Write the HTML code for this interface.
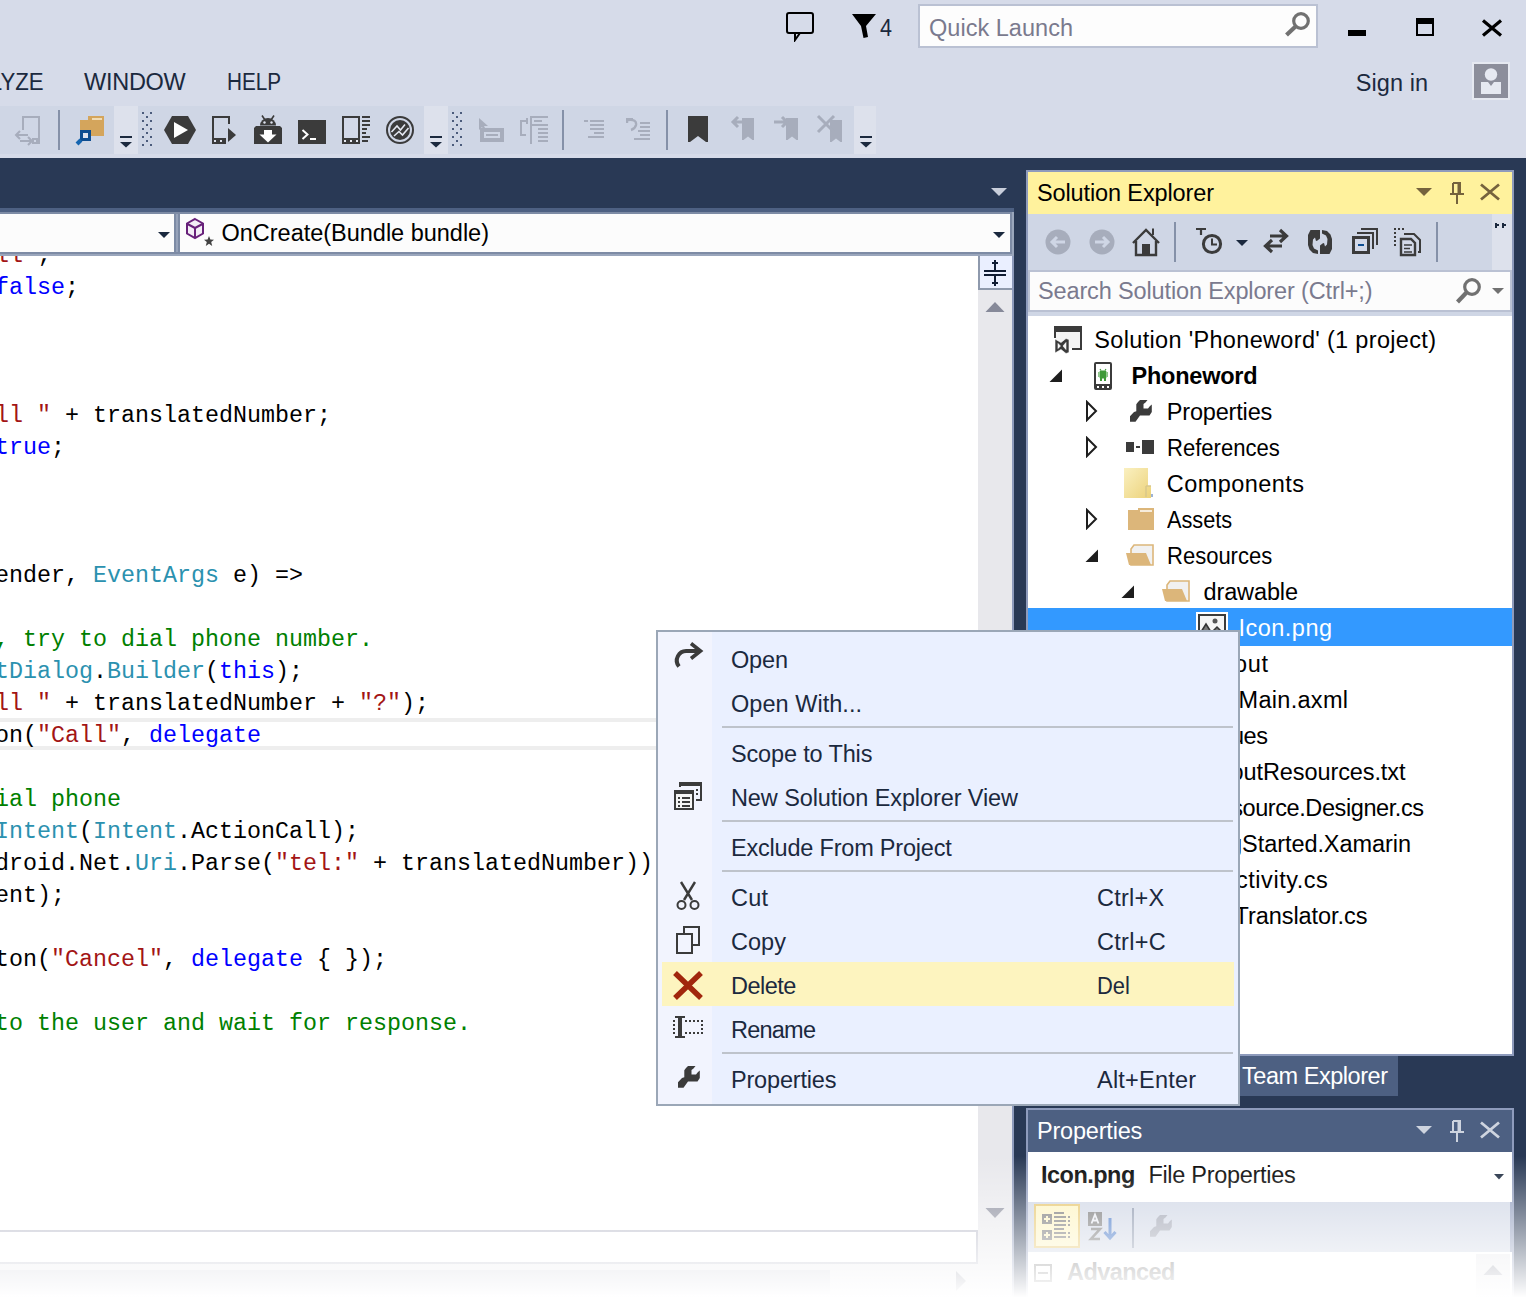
<!DOCTYPE html>
<html lang="en"><head><meta charset="utf-8"><title>Phoneword - Microsoft Visual Studio</title>
<style>
html,body{margin:0;padding:0;}
body{width:1526px;height:1302px;overflow:hidden;background:#d6dbe9;position:relative;font-family:"Liberation Sans", sans-serif;}
#root{position:absolute;left:0;top:0;width:1526px;height:1302px;overflow:hidden;}
#root div,#root span.t,#root svg,#root pre{position:absolute;}
span.t{white-space:pre;line-height:30px;height:30px;}
pre{margin:0;font-family:"Liberation Mono", monospace;white-space:pre;}
.k{color:#0000ff}.s{color:#a31515}.c{color:#008000}.y{color:#2b91af}
</style></head><body><div id="root">
<div style="left:918px;top:4px;width:400px;height:44px;background:#fdfdfd;box-sizing:border-box;border:2px solid #bac1d3;"></div>
<span id="t1" class="t " style="left:929px;top:12.66px;font-size:23.5px;color:#7a7a8e;letter-spacing:0.027px;">Quick Launch</span>
<span id="t2" class="t " style="left:880px;top:12.86px;font-size:23.5px;color:#1b293e;letter-spacing:0.000px;transform:scaleX(0.9176);transform-origin:0 0;">4</span>
<span id="t3" class="t " style="left:-56px;top:66.66px;font-size:23.5px;color:#1b293e;letter-spacing:0.000px;transform:scaleX(0.9453);transform-origin:0 0;">ANALYZE</span>
<span id="t4" class="t " style="left:84px;top:66.66px;font-size:23.5px;color:#1b293e;letter-spacing:-0.265px;">WINDOW</span>
<span id="t5" class="t " style="left:226.5px;top:66.66px;font-size:23.5px;color:#1b293e;letter-spacing:0.000px;transform:scaleX(0.8829);transform-origin:0 0;">HELP</span>
<span id="t6" class="t " style="left:1355.8px;top:68.16px;font-size:23.5px;color:#1b293e;letter-spacing:0.057px;">Sign in</span>
<div style="left:1472px;top:62px;width:38px;height:38px;background:#8c8e9b;box-sizing:border-box;border:2px solid #e6e9f1;"></div>
<div style="left:0px;top:106px;width:114px;height:48px;background:#cfd6e5;"></div>
<div style="left:114px;top:106px;width:24px;height:48px;background:#dde1ec;"></div>
<div style="left:138px;top:106px;width:286px;height:48px;background:#cfd6e5;"></div>
<div style="left:424px;top:106px;width:24px;height:48px;background:#dde1ec;"></div>
<div style="left:448px;top:106px;width:406px;height:48px;background:#cfd6e5;"></div>
<div style="left:854px;top:106px;width:22px;height:48px;background:#dde1ec;"></div>
<div style="left:58px;top:110px;width:2px;height:40px;background:#8591a8;"></div>
<div style="left:562px;top:110px;width:2px;height:40px;background:#8591a8;"></div>
<div style="left:666px;top:110px;width:2px;height:40px;background:#8591a8;"></div>
<svg style="left:784px;top:10px" width="32" height="32" viewBox="0 0 32 32"><rect x="3" y="3" width="26" height="20" rx="2" fill="none" stroke="#000" stroke-width="2"/><path d="M11,23 V30 L16,23" fill="none" stroke="#000" stroke-width="2"/></svg>
<svg style="left:850px;top:12px" width="28" height="28" viewBox="0 0 28 28"><path d="M2,2 H26 L16,14 L18,25 L13.5,26 L11,14 Z" fill="#000"/></svg>
<svg style="left:1282px;top:8px" width="32" height="32" viewBox="0 0 32 32"><circle cx="19" cy="13" r="7.3" fill="none" stroke="#717171" stroke-width="3.2"/><path d="M13.5,18.5 L4.5,27" stroke="#717171" stroke-width="4.2" fill="none"/></svg>
<div style="left:1348px;top:30px;width:18px;height:6px;background:#000;"></div>
<div style="left:1416px;top:18px;width:18px;height:18px;background:transparent;box-sizing:border-box;border:2px solid #000;border-top-width:6px;"></div>
<svg style="left:1480px;top:18px" width="24" height="20" viewBox="0 0 24 20"><path d="M3,2.5 L21,17.5 M21,2.5 L3,17.5" stroke="#000" stroke-width="3.2" fill="none"/></svg>
<svg style="left:1474px;top:64px" width="34" height="34" viewBox="0 0 34 34"><circle cx="17" cy="10.5" r="6.2" fill="#e6e9f1"/><path d="M7,18 H14 L17,22 L20,18 H27 V30 H7 Z" fill="#e6e9f1"/></svg>
<svg style="left:119px;top:134px" width="14" height="16" viewBox="0 0 14 16"><rect x="1" y="2" width="12" height="2" fill="#1b293e"/><path d="M1,8 H13 L7,13.500 Z" fill="#1b293e"/></svg>
<svg style="left:429px;top:134px" width="14" height="16" viewBox="0 0 14 16"><rect x="1" y="2" width="12" height="2" fill="#1b293e"/><path d="M1,8 H13 L7,13.500 Z" fill="#1b293e"/></svg>
<svg style="left:859px;top:134px" width="14" height="16" viewBox="0 0 14 16"><rect x="1" y="2" width="12" height="2" fill="#1b293e"/><path d="M1,8 H13 L7,13.500 Z" fill="#1b293e"/></svg>
<svg style="left:142px;top:110px" width="10" height="40" viewBox="0 0 10 40" shape-rendering="crispEdges"><rect x="0" y="2" width="2" height="2" fill="#4b5b7b"/><rect x="8" y="2" width="2" height="2" fill="#4b5b7b"/><rect x="4" y="6" width="2" height="2" fill="#4b5b7b"/><rect x="0" y="10" width="2" height="2" fill="#4b5b7b"/><rect x="8" y="10" width="2" height="2" fill="#4b5b7b"/><rect x="4" y="14" width="2" height="2" fill="#4b5b7b"/><rect x="0" y="18" width="2" height="2" fill="#4b5b7b"/><rect x="8" y="18" width="2" height="2" fill="#4b5b7b"/><rect x="4" y="22" width="2" height="2" fill="#4b5b7b"/><rect x="0" y="26" width="2" height="2" fill="#4b5b7b"/><rect x="8" y="26" width="2" height="2" fill="#4b5b7b"/><rect x="4" y="30" width="2" height="2" fill="#4b5b7b"/><rect x="0" y="34" width="2" height="2" fill="#4b5b7b"/><rect x="8" y="34" width="2" height="2" fill="#4b5b7b"/></svg>
<svg style="left:452px;top:110px" width="10" height="40" viewBox="0 0 10 40" shape-rendering="crispEdges"><rect x="0" y="2" width="2" height="2" fill="#4b5b7b"/><rect x="8" y="2" width="2" height="2" fill="#4b5b7b"/><rect x="4" y="6" width="2" height="2" fill="#4b5b7b"/><rect x="0" y="10" width="2" height="2" fill="#4b5b7b"/><rect x="8" y="10" width="2" height="2" fill="#4b5b7b"/><rect x="4" y="14" width="2" height="2" fill="#4b5b7b"/><rect x="0" y="18" width="2" height="2" fill="#4b5b7b"/><rect x="8" y="18" width="2" height="2" fill="#4b5b7b"/><rect x="4" y="22" width="2" height="2" fill="#4b5b7b"/><rect x="0" y="26" width="2" height="2" fill="#4b5b7b"/><rect x="8" y="26" width="2" height="2" fill="#4b5b7b"/><rect x="4" y="30" width="2" height="2" fill="#4b5b7b"/><rect x="0" y="34" width="2" height="2" fill="#4b5b7b"/><rect x="8" y="34" width="2" height="2" fill="#4b5b7b"/></svg>
<svg style="left:14px;top:114px" width="28" height="32" viewBox="0 0 28 32"><rect x="8" y="2" width="18" height="2" fill="#a7adbc"/><rect x="8" y="2" width="2" height="14" fill="#a7adbc"/><rect x="24" y="2" width="2" height="24" fill="#a7adbc"/><rect x="2" y="20" width="12" height="2" fill="#a7adbc"/><path d="M6,17 L2,21 L6,25" fill="none" stroke="#a7adbc" stroke-width="2"/><rect x="6" y="26" width="12" height="2" fill="#a7adbc"/><path d="M14,23 L18,27 L14,31" fill="none" stroke="#a7adbc" stroke-width="2"/><rect x="18" y="24" width="8" height="6" fill="#a7adbc"/><rect x="20" y="26" width="2" height="2" fill="#cfd6e5"/></svg>
<svg style="left:74px;top:114px" width="32" height="32" viewBox="0 0 32 32"><rect x="6" y="6" width="24" height="16" fill="#d4a55c"/><rect x="14" y="2" width="16" height="4" fill="#d4a55c"/><rect x="18" y="4" width="10" height="2" fill="#f1dcb4"/><rect x="7.5" y="17.5" width="8" height="8" fill="#dfe3ee" stroke="#0e4d90" stroke-width="3"/><path d="M7,26 L3,30" stroke="#1565b0" stroke-width="4"/></svg>
<svg style="left:162px;top:114px" width="36" height="32" viewBox="0 0 36 32"><path d="M2,16 L10,2 H26 L34,16 L26,30 H10 Z" fill="#3b3b3b"/><path d="M12,8 L26,16 L12,24 Z" fill="#fff"/></svg>
<svg style="left:210px;top:114px" width="28" height="32" viewBox="0 0 28 32"><path d="M19,10 V3 H3 V29 H15" fill="none" stroke="#3b3b3b" stroke-width="2"/><rect x="2" y="24" width="14" height="6" fill="#3b3b3b"/><rect x="4" y="26" width="2" height="2" fill="#dfe3ee"/><rect x="10" y="26" width="2" height="2" fill="#dfe3ee"/><path d="M18,14 L26,21 L18,28 Z" fill="#3b3b3b"/></svg>
<svg style="left:252px;top:114px" width="32" height="32" viewBox="0 0 32 32"><path d="M8,11.5 A8,7.5 0 0 1 24,11.5 Z" fill="#3b3b3b"/><path d="M10,1.5 L13,6 M22,1.5 L19,6" stroke="#3b3b3b" stroke-width="1.6"/><circle cx="12.5" cy="8.5" r="1.2" fill="#dfe3ee"/><circle cx="19.5" cy="8.5" r="1.2" fill="#dfe3ee"/><path d="M2,14 L4,12 H28 L30,14 V30 H2 Z" fill="#3b3b3b"/><path d="M12,16 H20 V20.5 H24.5 L16,28.5 L7.5,20.5 H12 Z" fill="#fff"/></svg>
<svg style="left:298px;top:120px" width="28" height="24" viewBox="0 0 28 24"><rect x="0" y="0" width="28" height="24" fill="#3b3b3b"/><path d="M4.5,10 L9.5,14.5 L4.5,19" fill="none" stroke="#fff" stroke-width="2"/><rect x="12" y="18" width="6" height="2" fill="#fff"/></svg>
<svg style="left:342px;top:116px" width="28" height="28" viewBox="0 0 28 28" shape-rendering="crispEdges"><rect x="0" y="0" width="18" height="28" fill="#3b3b3b"/><rect x="2" y="2" width="14" height="20" fill="#d3d9e8"/><rect x="2" y="24" width="2" height="2" fill="#e9ecf4"/><rect x="8" y="24" width="2" height="2" fill="#e9ecf4"/><rect x="14" y="24" width="2" height="2" fill="#e9ecf4"/><rect x="20" y="0" width="8" height="2" fill="#3b3b3b"/><rect x="20" y="4" width="8" height="2" fill="#3b3b3b"/><rect x="20" y="8" width="8" height="2" fill="#3b3b3b"/><rect x="20" y="12" width="5" height="2" fill="#3b3b3b"/><rect x="20" y="16" width="4" height="2" fill="#3b3b3b"/><rect x="20" y="20" width="8" height="2" fill="#3b3b3b"/><rect x="20" y="24" width="6" height="2" fill="#3b3b3b"/></svg>
<svg style="left:385px;top:115px" width="30" height="30" viewBox="0 0 30 30"><circle cx="15" cy="15" r="13" fill="none" stroke="#3b3b3b" stroke-width="2"/><circle cx="15" cy="15" r="10" fill="#3b3b3b"/><path d="M6.5,17 L12,11 L15.5,15 L20,9.5 M9,21 L14,16.5 L17.5,20 L23.5,13" fill="none" stroke="#e4e7f0" stroke-width="1.6"/></svg>
<svg style="left:476px;top:116px" width="30" height="28" viewBox="0 0 30 28"><path d="M3,2 V14 L6,11 L8,15 L10,14 L8,10 H12 Z" fill="#a7adbc"/><path d="M4,12 H28 V26 H4 Z M8,16 V22 H24 V16 Z" fill-rule="evenodd" fill="#a7adbc"/><rect x="10" y="18" width="12" height="2" fill="#a7adbc"/></svg>
<svg style="left:520px;top:116px" width="28" height="28" viewBox="0 0 28 28" shape-rendering="crispEdges"><rect x="10" y="0" width="2" height="28" fill="#a7adbc"/><rect x="10" y="0" width="18" height="2" fill="#a7adbc"/><rect x="0" y="4" width="8" height="2" fill="#a7adbc"/><rect x="0" y="4" width="2" height="16" fill="#a7adbc"/><rect x="0" y="18" width="6" height="2" fill="#a7adbc"/><rect x="6" y="2" width="2" height="6" fill="#a7adbc"/><rect x="14" y="4" width="8" height="2" fill="#a7adbc"/><rect x="12" y="8" width="16" height="2" fill="#a7adbc"/><rect x="18" y="12" width="10" height="2" fill="#a7adbc"/><rect x="18" y="16" width="10" height="2" fill="#a7adbc"/><rect x="18" y="20" width="10" height="2" fill="#a7adbc"/><rect x="18" y="24" width="10" height="2" fill="#a7adbc"/></svg>
<svg style="left:584px;top:120px" width="20" height="18" viewBox="0 0 20 18" shape-rendering="crispEdges"><rect x="0" y="0" width="4" height="2" fill="#a7adbc"/><rect x="6" y="0" width="14" height="2" fill="#a7adbc"/><rect x="6" y="4" width="14" height="2" fill="#a7adbc"/><rect x="6" y="8" width="14" height="2" fill="#a7adbc"/><rect x="10" y="12" width="10" height="2" fill="#a7adbc"/><rect x="4" y="16" width="16" height="2" fill="#a7adbc"/></svg>
<svg style="left:626px;top:118px" width="24" height="24" viewBox="0 0 24 24"><rect x="14" y="4" width="10" height="2" fill="#a7adbc"/><rect x="14" y="8" width="10" height="2" fill="#a7adbc"/><rect x="12" y="12" width="12" height="2" fill="#a7adbc"/><rect x="14" y="16" width="10" height="2" fill="#a7adbc"/><rect x="8" y="20" width="16" height="2" fill="#a7adbc"/><path d="M1,1 H7 M1,0 V5 M2,2 Q11,1 10,7 Q9,11 5,12" fill="none" stroke="#a7adbc" stroke-width="2.4"/></svg>
<svg style="left:688px;top:116px" width="20" height="26" viewBox="0 0 20 26"><path d="M0,0 H20 V26 H18 L10,20 L2,26 H0 Z" fill="#3b3b3b"/></svg>
<svg style="left:730px;top:114px" width="26" height="28" viewBox="0 0 26 28"><path d="M12,4 H24 V26 H22.5 L18,22.5 L13.5,26 H12 Z" fill="#a7adbc"/><path d="M16,8 H3 M8,3 L3,8 L8,13" fill="none" stroke="#a7adbc" stroke-width="3"/></svg>
<svg style="left:772px;top:114px" width="28" height="28" viewBox="0 0 28 28"><path d="M14,4 H26 V26 H24.5 L20,22.5 L15.5,26 H14 Z" fill="#a7adbc"/><path d="M2,8 H15 M10,3 L15,8 L10,13" fill="none" stroke="#a7adbc" stroke-width="3"/></svg>
<svg style="left:816px;top:114px" width="28" height="30" viewBox="0 0 28 30"><path d="M14,6 H26 V28 H24.5 L20,24.5 L15.5,28 H14 Z" fill="#a7adbc"/><path d="M2,2 L18,18 M18,2 L2,18" fill="none" stroke="#a7adbc" stroke-width="3"/></svg>
<div style="left:0px;top:158px;width:1526px;height:1144px;background:#293955;"></div>
<div style="left:0px;top:208px;width:1014px;height:4px;background:#4d6082;"></div>
<div style="left:0px;top:212px;width:1014px;height:44px;background:#7d8ba5;"></div>
<div style="left:0px;top:254px;width:1014px;height:2px;background:#9aa6bc;"></div>
<div style="left:176px;top:214px;width:2px;height:38px;background:#97a3ba;"></div>
<div style="left:0px;top:214px;width:174px;height:38px;background:#fcfcfc;"></div>
<div style="left:180px;top:214px;width:830px;height:38px;background:#fcfcfc;"></div>
<div style="left:1012px;top:212px;width:2px;height:44px;background:#9aa6bc;"></div>
<span id="t7" class="t " style="left:221.5px;top:218.16px;font-size:23.5px;color:#000000;letter-spacing:-0.014px;">OnCreate(Bundle bundle)</span>
<div style="left:0px;top:256px;width:978px;height:974px;background:#ffffff;"></div>
<div style="left:978px;top:256px;width:34px;height:1046px;background:#e8e8ec;"></div>
<div style="left:1012px;top:256px;width:2px;height:1046px;background:#8e9bbc;"></div>
<div style="left:978px;top:256px;width:34px;height:34px;background:#eaefff;box-sizing:border-box;border:2px solid #8e99ad;border-top:none;border-right:none;"></div>
<div style="left:0px;top:718px;width:978px;height:32px;background:#ffffff;box-sizing:border-box;border-top:4px solid #eeeeee;border-bottom:4px solid #eeeeee;"></div>
<div style="left:-4px;top:1230px;width:982px;height:34px;background:#ffffff;box-sizing:border-box;border:2px solid #b9bbc9;"></div>
<div style="left:0px;top:1264px;width:978px;height:38px;background:#e8e8ec;"></div>
<div style="left:0;top:256px;width:978px;height:974px;overflow:hidden;background:transparent">
<pre style="left:-5px;top:-16.20px;font-size:23.33px;line-height:32px;height:32px;color:#000"><span class="s">ll"</span>;</pre>
<pre style="left:-5px;top:15.80px;font-size:23.33px;line-height:32px;height:32px;color:#000"><span class="k">false</span>;</pre>
<pre style="left:-5px;top:143.80px;font-size:23.33px;line-height:32px;height:32px;color:#000"><span class="s">ll "</span> + translatedNumber;</pre>
<pre style="left:-5px;top:175.80px;font-size:23.33px;line-height:32px;height:32px;color:#000"><span class="k">true</span>;</pre>
<pre style="left:-5px;top:303.80px;font-size:23.33px;line-height:32px;height:32px;color:#000">ender, <span class="y">EventArgs</span> e) =&gt;</pre>
<pre style="left:-5px;top:367.80px;font-size:23.33px;line-height:32px;height:32px;color:#000"><span class="c">, try to dial phone number.</span></pre>
<pre style="left:-5px;top:399.80px;font-size:23.33px;line-height:32px;height:32px;color:#000"><span class="y">tDialog</span>.<span class="y">Builder</span>(<span class="k">this</span>);</pre>
<pre style="left:-5px;top:431.80px;font-size:23.33px;line-height:32px;height:32px;color:#000"><span class="s">ll "</span> + translatedNumber + <span class="s">"?"</span>);</pre>
<pre style="left:-5px;top:463.80px;font-size:23.33px;line-height:32px;height:32px;color:#000">on(<span class="s">"Call"</span>, <span class="k">delegate</span></pre>
<pre style="left:-5px;top:527.80px;font-size:23.33px;line-height:32px;height:32px;color:#000"><span class="c">ial phone</span></pre>
<pre style="left:-5px;top:559.80px;font-size:23.33px;line-height:32px;height:32px;color:#000"><span class="y">Intent</span>(<span class="y">Intent</span>.ActionCall);</pre>
<pre style="left:-5px;top:591.80px;font-size:23.33px;line-height:32px;height:32px;color:#000">droid.Net.<span class="y">Uri</span>.Parse(<span class="s">"tel:"</span> + translatedNumber))</pre>
<pre style="left:-5px;top:623.80px;font-size:23.33px;line-height:32px;height:32px;color:#000">ent);</pre>
<pre style="left:-5px;top:687.80px;font-size:23.33px;line-height:32px;height:32px;color:#000">ton(<span class="s">"Cancel"</span>, <span class="k">delegate</span> { });</pre>
<pre style="left:-5px;top:751.80px;font-size:23.33px;line-height:32px;height:32px;color:#000"><span class="c">to the user and wait for response.</span></pre>
</div>
<div style="left:1026px;top:170px;width:488px;height:886px;background:#8e9bbc;"></div>
<div style="left:1028px;top:172px;width:484px;height:42px;background:#fff29d;"></div>
<span id="t8" class="t " style="left:1037px;top:178.06px;font-size:23.5px;color:#000000;letter-spacing:-0.123px;">Solution Explorer</span>
<div style="left:1028px;top:214px;width:464px;height:56px;background:#cfd6e5;"></div>
<div style="left:1492px;top:214px;width:20px;height:56px;background:#dde1ec;"></div>
<div style="left:1174px;top:222px;width:2px;height:40px;background:#8591a8;"></div>
<div style="left:1436px;top:222px;width:2px;height:40px;background:#8591a8;"></div>
<div style="left:1028px;top:270px;width:484px;height:46px;background:#cfd6e5;"></div>
<div style="left:1028px;top:270px;width:484px;height:42px;background:#fcfcfc;box-sizing:border-box;border:2px solid #bac1d3;"></div>
<span id="t9" class="t " style="left:1038px;top:275.86px;font-size:23.5px;color:#7a7a8e;letter-spacing:-0.136px;">Search Solution Explorer (Ctrl+;)</span>
<div style="left:1028px;top:316px;width:484px;height:738px;background:#ffffff;"></div>
<div style="left:1028px;top:608px;width:484px;height:38px;background:#3399ff;"></div>
<span id="t10" class="t " style="left:1094.3px;top:324.66px;font-size:23.5px;color:#000000;letter-spacing:0.324px;">Solution 'Phoneword' (1 project)</span>
<span id="t11" class="t " style="left:1131.5px;top:360.66px;font-size:23.5px;color:#000000;font-weight:bold;letter-spacing:-0.232px;">Phoneword</span>
<span id="t12" class="t " style="left:1166.8px;top:396.66px;font-size:23.5px;color:#000000;letter-spacing:-0.179px;">Properties</span>
<span id="t13" class="t " style="left:1166.8px;top:432.66px;font-size:23.5px;color:#000000;letter-spacing:0.000px;transform:scaleX(0.9385);transform-origin:0 0;">References</span>
<span id="t14" class="t " style="left:1166.8px;top:468.66px;font-size:23.5px;color:#000000;letter-spacing:0.439px;">Components</span>
<span id="t15" class="t " style="left:1166.8px;top:504.66px;font-size:23.5px;color:#000000;letter-spacing:0.000px;transform:scaleX(0.9244);transform-origin:0 0;">Assets</span>
<span id="t16" class="t " style="left:1166.8px;top:540.66px;font-size:23.5px;color:#000000;letter-spacing:0.000px;transform:scaleX(0.9365);transform-origin:0 0;">Resources</span>
<span id="t17" class="t " style="left:1203.5px;top:576.66px;font-size:23.5px;color:#000000;letter-spacing:-0.125px;">drawable</span>
<span id="t18" class="t " style="left:1238.5px;top:612.66px;font-size:23.5px;color:#ffffff;letter-spacing:0.478px;">Icon.png</span>
<span id="t19" class="t " style="left:1202px;top:648.66px;font-size:23.5px;color:#000000;letter-spacing:0.656px;">layout</span>
<span id="t20" class="t " style="left:1238.5px;top:684.66px;font-size:23.5px;color:#000000;letter-spacing:0.301px;">Main.axml</span>
<span id="t21" class="t " style="left:1202px;top:720.66px;font-size:23.5px;color:#000000;letter-spacing:-0.388px;">values</span>
<span id="t22" class="t " style="left:1202px;top:756.66px;font-size:23.5px;color:#000000;letter-spacing:-0.093px;">AboutResources.txt</span>
<span id="t23" class="t " style="left:1202px;top:792.66px;font-size:23.5px;color:#000000;letter-spacing:-0.415px;">Resource.Designer.cs</span>
<span id="t24" class="t " style="left:1166.8px;top:828.66px;font-size:23.5px;color:#000000;letter-spacing:-0.066px;">GettingStarted.Xamarin</span>
<span id="t25" class="t " style="left:1166.8px;top:864.66px;font-size:23.5px;color:#000000;letter-spacing:0.525px;">MainActivity.cs</span>
<span id="t26" class="t " style="left:1166.8px;top:900.66px;font-size:23.5px;color:#000000;letter-spacing:-0.053px;">PhoneTranslator.cs</span>
<div style="left:1028px;top:1056px;width:370px;height:40px;background:#4d6082;"></div>
<span id="t27" class="t " style="left:1242px;top:1060.86px;font-size:23.5px;color:#ffffff;letter-spacing:-0.458px;">Team Explorer</span>
<div style="left:1026px;top:1108px;width:488px;height:200px;background:#8e9bbc;"></div>
<div style="left:1028px;top:1110px;width:484px;height:42px;background:#4d6082;"></div>
<span id="t28" class="t " style="left:1037px;top:1115.86px;font-size:23.5px;color:#ffffff;letter-spacing:-0.201px;">Properties</span>
<div style="left:1028px;top:1152px;width:484px;height:50px;background:#ffffff;"></div>
<span id="t29" class="t " style="left:1041px;top:1160.06px;font-size:23.5px;color:#000000;font-weight:bold;letter-spacing:-0.515px;">Icon.png</span>
<span id="t30" class="t " style="left:1148.4px;top:1160.06px;font-size:23.5px;color:#000000;letter-spacing:-0.300px;">File Properties</span>
<div style="left:1028px;top:1202px;width:482px;height:50px;background:#cfd6e5;"></div>
<div style="left:1034px;top:1204px;width:46px;height:44px;background:#fdf4bf;box-sizing:border-box;border:2px solid #e5c365;"></div>
<div style="left:1132px;top:1208px;width:2px;height:40px;background:#8591a8;"></div>
<div style="left:1028px;top:1252px;width:484px;height:50px;background:#ffffff;"></div>
<div style="left:1476px;top:1254px;width:34px;height:48px;background:#e8e8ec;"></div>
<div style="left:1034px;top:1264px;width:18px;height:18px;background:#ffffff;box-sizing:border-box;border:2px solid #707070;"></div>
<div style="left:1038px;top:1272px;width:10px;height:2px;background:#707070;"></div>
<span id="t31" class="t " style="left:1067px;top:1257.26px;font-size:23.5px;color:#5a5a5a;font-weight:bold;letter-spacing:-0.561px;">Advanced</span>
<svg style="left:990px;top:186px" width="18" height="12" viewBox="0 0 18 12"><path d="M1,2 H17 L9,10 Z" fill="#c8cedb"/></svg>
<svg style="left:158px;top:231px" width="12" height="8" viewBox="0 0 12 8"><path d="M0,1 H12 L6,7 Z" fill="#1b293e"/></svg>
<svg style="left:993px;top:231px" width="12" height="8" viewBox="0 0 12 8"><path d="M0,1 H12 L6,7 Z" fill="#1b293e"/></svg>
<svg style="left:184px;top:216px" width="32" height="32" viewBox="0 0 32 32"><path d="M11,3 L19,7.5 V17.5 L11,22 L3,17.5 V7.5 Z" fill="#f3eef6" stroke="#68217a" stroke-width="2"/><path d="M3.5,8 L11,12 L18.500,8 M11,12 V21.5" fill="none" stroke="#68217a" stroke-width="2"/><path d="M25,20 L26.400,23.600 L30,23.800 L27.200,26.000 L28.200,30 L25,27.800 L21.800,30 L22.800,26.000 L20,23.800 L23.600,23.600 Z" fill="#424242"/></svg>
<svg style="left:982px;top:258px" width="28" height="30" viewBox="0 0 28 30" shape-rendering="crispEdges"><rect x="2" y="12" width="22" height="2" fill="#0f1b33"/><rect x="2" y="16" width="22" height="2" fill="#0f1b33"/><rect x="12" y="2" width="2" height="10" fill="#0f1b33"/><rect x="12" y="18" width="2" height="10" fill="#0f1b33"/><rect x="10" y="4" width="6" height="2" fill="#0f1b33"/><rect x="10" y="24" width="6" height="2" fill="#0f1b33"/></svg>
<svg style="left:985px;top:301px" width="20" height="12" viewBox="0 0 20 12"><path d="M10,1 L19.500,11 H0.500 Z" fill="#868999"/></svg>
<svg style="left:985px;top:1207px" width="20" height="12" viewBox="0 0 20 12"><path d="M10,11 L19.500,1 H0.500 Z" fill="#868999"/></svg>
<svg style="left:954px;top:1270px" width="14" height="22" viewBox="0 0 14 22"><path d="M2,1 L12,11 L2,21 Z" fill="#868999"/></svg>
<div style="left:0px;top:1270px;width:830px;height:24px;background:#c9cbd6;"></div>
<svg style="left:1416px;top:187px" width="16" height="10" viewBox="0 0 16 10"><path d="M0,1 H16 L8,9 Z" fill="#75633d"/></svg>
<svg style="left:1449px;top:181px" width="16" height="24" viewBox="0 0 16 24"><path d="M4,2 H11 V13 M4,2 V13 M1,13 H15 M8,13 V23 M9.500,2 V13" fill="none" stroke="#75633d" stroke-width="2"/></svg>
<svg style="left:1479px;top:183px" width="22" height="18" viewBox="0 0 22 18"><path d="M2,1.500 L20,16.500 M20,1.500 L2,16.500" stroke="#75633d" stroke-width="2.800" fill="none"/></svg>
<svg style="left:1044px;top:228px" width="28" height="28" viewBox="0 0 28 28"><circle cx="14" cy="14" r="12.500" fill="#a7adbc"/><path d="M21,14 H8 M13,9 L8,14 L13,19" fill="none" stroke="#cfd6e5" stroke-width="3"/></svg>
<svg style="left:1088px;top:228px" width="28" height="28" viewBox="0 0 28 28"><circle cx="14" cy="14" r="12.500" fill="#a7adbc"/><path d="M7,14 H20 M15,9 L20,14 L15,19" fill="none" stroke="#cfd6e5" stroke-width="3"/></svg>
<svg style="left:1130px;top:226px" width="32" height="32" viewBox="0 0 32 32"><path d="M3,17 L16,4 L29,17" fill="none" stroke="#3b3b3b" stroke-width="2.400"/><path d="M6,15 V29 H26 V15" fill="none" stroke="#3b3b3b" stroke-width="2.400"/><path d="M23,9 V2.500" stroke="#3b3b3b" stroke-width="2"/><rect x="12" y="18" width="8" height="11" fill="#3b3b3b"/></svg>
<svg style="left:1194px;top:226px" width="30" height="30" viewBox="0 0 30 30"><path d="M2,3 H12 M7,3 V9" stroke="#3b3b3b" stroke-width="2.200" fill="none"/><circle cx="18" cy="18" r="8.600" fill="none" stroke="#3b3b3b" stroke-width="3"/><path d="M18,12.500 V18.500 H23" fill="none" stroke="#3b3b3b" stroke-width="2"/></svg>
<svg style="left:1236px;top:240px" width="12" height="7" viewBox="0 0 12 7"><path d="M0,0 H12 L6,6 Z" fill="#1b293e"/></svg>
<svg style="left:1262px;top:228px" width="28" height="26" viewBox="0 0 28 26"><path d="M8,8 H24 M18,2 L24.500,8 L18,14" fill="none" stroke="#3b3b3b" stroke-width="3.200"/><path d="M20,18 H4 M10,12 L3.500,18 L10,24" fill="none" stroke="#3b3b3b" stroke-width="3.200"/></svg>
<svg style="left:1308px;top:230px" width="24" height="24" viewBox="0 0 24 24"><path d="M2.500,0 H12 V8.500 L9.500,10.500 L8,11 L7,7.500 L5,9.500 L4.500,15 L6,18.500 L10,20.500 V24 L5,23 L1.500,19.500 L0,15 V5 Z" fill="#3b3b3b"/><path d="M2.500,0 H12 V8.500 L9.500,10.500 L8,11 L7,7.500 L5,9.500 L4.500,15 L6,18.500 L10,20.500 V24 L5,23 L1.500,19.500 L0,15 V5 Z" fill="#3b3b3b" transform="rotate(180 12 12)"/></svg>
<svg style="left:1350px;top:226px" width="30" height="30" viewBox="0 0 30 30"><rect x="3.500" y="11.500" width="15" height="15" fill="#d3d9e8" stroke="#3b3b3b" stroke-width="3"/><rect x="8" y="18" width="6" height="2" fill="#0e4d90"/><path d="M7,7 H23 V23 M11,3 H27 V19" fill="none" stroke="#3b3b3b" stroke-width="2"/></svg>
<svg style="left:1392px;top:226px" width="32" height="32" viewBox="0 0 32 32"><path d="M2,3 H12 M3,2 V20" fill="none" stroke="#3b3b3b" stroke-width="2" stroke-dasharray="2 2"/><path d="M12,8 H22 L28,14 V26 H26" fill="none" stroke="#3b3b3b" stroke-width="2"/><path d="M9,13 H19 L23,17 V29 H9 Z" fill="#d3d9e8" stroke="#3b3b3b" stroke-width="2.400"/><path d="M12,19 H20 M12,22.500 H18 M12,26 H20" stroke="#3b3b3b" stroke-width="1.600"/></svg>
<svg style="left:1494px;top:222px" width="14" height="10" viewBox="0 0 14 10"><rect x="1" y="1" width="2" height="5" fill="#1b293e"/><rect x="8" y="1" width="2" height="5" fill="#1b293e"/><rect x="3" y="2" width="2" height="2" fill="#1b293e"/><rect x="10" y="2" width="2" height="2" fill="#1b293e"/></svg>
<svg style="left:1454px;top:276px" width="30" height="30" viewBox="0 0 30 30"><circle cx="18" cy="11" r="7.300" fill="none" stroke="#717171" stroke-width="3.200"/><path d="M12.500,16.500 L3.500,26" stroke="#717171" stroke-width="4.200" fill="none"/></svg>
<svg style="left:1492px;top:288px" width="12" height="7" viewBox="0 0 12 7"><path d="M0,0 H12 L6,6 Z" fill="#717171"/></svg>
<svg style="left:1049px;top:369px" width="14" height="14" viewBox="0 0 14 14"><path d="M13,0.500 V13 H0.500 Z" fill="#1e1e1e"/></svg>
<svg style="left:1086px;top:400px" width="12" height="22" viewBox="0 0 12 22"><path d="M1,2 L10,11 L1,20 Z" fill="#fff" stroke="#1e1e1e" stroke-width="2"/></svg>
<svg style="left:1086px;top:436px" width="12" height="22" viewBox="0 0 12 22"><path d="M1,2 L10,11 L1,20 Z" fill="#fff" stroke="#1e1e1e" stroke-width="2"/></svg>
<svg style="left:1086px;top:508px" width="12" height="22" viewBox="0 0 12 22"><path d="M1,2 L10,11 L1,20 Z" fill="#fff" stroke="#1e1e1e" stroke-width="2"/></svg>
<svg style="left:1085px;top:549px" width="14" height="14" viewBox="0 0 14 14"><path d="M13,0.500 V13 H0.500 Z" fill="#1e1e1e"/></svg>
<svg style="left:1121px;top:585px" width="14" height="14" viewBox="0 0 14 14"><path d="M13,0.500 V13 H0.500 Z" fill="#1e1e1e"/></svg>
<svg style="left:1052px;top:324px" width="32" height="32" viewBox="0 0 32 32"><rect x="2" y="2" width="28" height="6" fill="#3b3b3b"/><rect x="2" y="2" width="2" height="12" fill="#3b3b3b"/><rect x="28" y="2" width="2" height="24" fill="#3b3b3b"/><rect x="20" y="24" width="10" height="2" fill="#3b3b3b"/><rect x="4" y="8" width="24" height="16" fill="#f5f5f5"/><path d="M3,15 L9,18.500 L14,14.500 L17,15.500 V28.500 L14,29.500 L9,25.500 L3,29 V27 Z M6,19.500 V24.500 L8.500,22 Z M14,18.500 L11,22 L14,25.500 Z" fill="#3b3b3b" fill-rule="evenodd" stroke="#fff" stroke-width="0.600"/></svg>
<svg style="left:1092px;top:360px" width="22" height="32" viewBox="0 0 22 32"><rect x="3" y="3" width="16" height="26" rx="1" fill="#fff" stroke="#3b3b3b" stroke-width="2"/><rect x="3" y="24" width="16" height="5" fill="#3b3b3b"/><rect x="5" y="26" width="2" height="2" fill="#fff"/><rect x="10" y="26" width="2" height="2" fill="#fff"/><rect x="15" y="26" width="2" height="2" fill="#fff"/><path d="M8,9 L9,10.500 M14,9 L13,10.500" stroke="#3f9b3a" stroke-width="1.200"/><rect x="7.500" y="10.500" width="7" height="8" rx="1.500" fill="#3f9b3a"/><rect x="6" y="12" width="1.5" height="5" fill="#8cc689"/><rect x="14.5" y="12" width="1.5" height="5" fill="#8cc689"/><rect x="8" y="18" width="2" height="3" fill="#3f9b3a"/><rect x="12" y="18" width="2" height="3" fill="#3f9b3a"/></svg>
<svg style="left:1129px;top:399px" width="24" height="24" viewBox="0 0 24 24"><path d="M11,1 H18.500 L16.500,3.500 L14.500,5 V9.500 H19 L21,7 L22.800,5.400 V13 L20.500,16.500 H11 L6.500,22.800 H1 V17.200 L5,13 L7.300,12.300 V5.200 L9,3 Z" fill="#3b3b3b"/></svg>
<svg style="left:1126px;top:440px" width="28" height="14" viewBox="0 0 28 14" shape-rendering="crispEdges"><rect x="0" y="2" width="8" height="10" fill="#3b3b3b"/><rect x="10" y="6" width="4" height="2" fill="#3b3b3b"/><rect x="16" y="0" width="12" height="14" fill="#3b3b3b"/></svg>
<svg style="left:1124px;top:468px" width="30" height="30" viewBox="0 0 30 30"><defs><linearGradient id="cg" x1="0" y1="0" x2="1" y2="1"><stop offset="0" stop-color="#faf0c0"/><stop offset="1" stop-color="#ecd27a"/></linearGradient></defs><path d="M0,0 H24 V18 H27 V30 H0 Z" fill="url(#cg)"/><path d="M22,18 V29 M22,18 H27" stroke="#d9c88a" stroke-width="1.500" fill="none"/><rect x="27" y="26" width="2" height="3" fill="#9db3d6"/></svg>
<svg style="left:1128px;top:508px" width="26" height="22" viewBox="0 0 26 22" shape-rendering="crispEdges"><rect x="0" y="2" width="26" height="20" fill="#dcb67a"/><rect x="10" y="0" width="16" height="4" fill="#dcb67a"/><rect x="12" y="2" width="12" height="2" fill="#f6ecdc"/></svg>
<svg style="left:1126px;top:544px" width="28" height="22" viewBox="0 0 28 22"><path d="M8,1 H27 V21 H5 V5 Z" fill="#f1f1f1" stroke="#dcb67a" stroke-width="1.600"/><path d="M0,9 H20 L25,21 H3 Z" fill="#dcb67a"/></svg>
<svg style="left:1162px;top:580px" width="28" height="22" viewBox="0 0 28 22"><path d="M8,1 H27 V21 H5 V5 Z" fill="#f1f1f1" stroke="#dcb67a" stroke-width="1.600"/><path d="M0,9 H20 L25,21 H3 Z" fill="#dcb67a"/></svg>
<svg style="left:1196px;top:612px" width="32" height="28" viewBox="0 0 32 28"><rect x="0" y="0" width="32" height="28" fill="#fff"/><rect x="3" y="3" width="26" height="24" fill="#f5f5f5" stroke="#3b3b3b" stroke-width="2"/><circle cx="19" cy="9" r="2.500" fill="#555"/><path d="M5,20 L10,12 L15,20 M16,20 L21,15 L26,20" fill="#777" stroke="#333" stroke-width="1.500"/></svg>
<svg style="left:1416px;top:1125px" width="16" height="10" viewBox="0 0 16 10"><path d="M0,1 H16 L8,9 Z" fill="#ced4df"/></svg>
<svg style="left:1449px;top:1119px" width="16" height="24" viewBox="0 0 16 24"><path d="M4,2 H11 V13 M4,2 V13 M1,13 H15 M8,13 V23 M9.500,2 V13" fill="none" stroke="#ced4df" stroke-width="2"/></svg>
<svg style="left:1479px;top:1121px" width="22" height="18" viewBox="0 0 22 18"><path d="M2,1.500 L20,16.500 M20,1.500 L2,16.500" stroke="#ced4df" stroke-width="2.800" fill="none"/></svg>
<svg style="left:1494px;top:1174px" width="10" height="6" viewBox="0 0 10 6"><path d="M0,0 H10 L5,5.500 Z" fill="#1b293e"/></svg>
<svg style="left:1483px;top:1264px" width="20" height="12" viewBox="0 0 20 12"><path d="M10,1 L19.500,11 H0.500 Z" fill="#868999"/></svg>
<svg style="left:1042px;top:1212px" width="28" height="28" viewBox="0 0 28 28" shape-rendering="crispEdges"><rect x="0" y="2" width="10" height="10" fill="#707070"/><rect x="2" y="6" width="6" height="2" fill="#fdf4bf"/><rect x="4" y="4" width="2" height="6" fill="#fdf4bf"/><rect x="0" y="18" width="10" height="10" fill="#707070"/><rect x="2" y="22" width="6" height="2" fill="#fdf4bf"/><rect x="4" y="20" width="2" height="6" fill="#fdf4bf"/><rect x="12" y="0" width="10" height="2" fill="#707070"/><rect x="12" y="4" width="16" height="2" fill="#707070"/><rect x="12" y="8" width="16" height="2" fill="#707070"/><rect x="12" y="12" width="16" height="2" fill="#707070"/><rect x="12" y="16" width="10" height="2" fill="#707070"/><rect x="12" y="20" width="16" height="2" fill="#707070"/><rect x="12" y="24" width="16" height="2" fill="#707070"/><rect x="24" y="4" width="2" height="2" fill="#fdf4bf"/><rect x="24" y="8" width="2" height="2" fill="#fdf4bf"/><rect x="24" y="12" width="2" height="2" fill="#fdf4bf"/><rect x="24" y="20" width="2" height="2" fill="#fdf4bf"/><rect x="24" y="24" width="2" height="2" fill="#fdf4bf"/></svg>
<svg style="left:1088px;top:1212px" width="30" height="30" viewBox="0 0 30 30"><rect x="0" y="0" width="14" height="14" fill="#707070"/><path d="M3.500,11.500 L7,2.500 L10.500,11.500 M5,8.500 H9" fill="none" stroke="#e9ecf4" stroke-width="1.800"/><path d="M3,17 H12 L3,27 H12" fill="none" stroke="#707070" stroke-width="2.600"/><path d="M22,6 V26 M16.500,20 L22,26 L27.500,20" fill="none" stroke="#3a6fc4" stroke-width="3"/></svg>
<svg style="left:1149px;top:1214px" width="24" height="24" viewBox="0 0 24 24"><path d="M11,1 H18.500 L16.500,3.500 L14.500,5 V9.500 H19 L21,7 L22.800,5.400 V13 L20.500,16.500 H11 L6.500,22.800 H1 V17.200 L5,13 L7.300,12.300 V5.200 L9,3 Z" fill="#9a9fae"/></svg>
<div style="left:656px;top:630px;width:584px;height:476px;background:#eaf0ff;box-sizing:border-box;border:2px solid #9ba7b7;"></div>
<div style="left:658px;top:632px;width:54px;height:472px;background:#f2f4fe;"></div>
<div style="left:722px;top:726px;width:511px;height:2px;background:#bec3cb;"></div>
<div style="left:722px;top:820px;width:511px;height:2px;background:#bec3cb;"></div>
<div style="left:722px;top:870px;width:511px;height:2px;background:#bec3cb;"></div>
<div style="left:722px;top:1052px;width:511px;height:2px;background:#bec3cb;"></div>
<div style="left:662px;top:962px;width:572px;height:44px;background:#fdf4bf;"></div>
<span id="t32" class="t " style="left:731px;top:644.86px;font-size:23.5px;color:#1b293e;letter-spacing:-0.167px;">Open</span>
<span id="t33" class="t " style="left:731px;top:688.86px;font-size:23.5px;color:#1b293e;letter-spacing:0.036px;">Open With...</span>
<span id="t34" class="t " style="left:731px;top:738.86px;font-size:23.5px;color:#1b293e;letter-spacing:-0.155px;">Scope to This</span>
<span id="t35" class="t " style="left:731px;top:782.86px;font-size:23.5px;color:#1b293e;letter-spacing:-0.102px;">New Solution Explorer View</span>
<span id="t36" class="t " style="left:731px;top:832.86px;font-size:23.5px;color:#1b293e;letter-spacing:-0.202px;">Exclude From Project</span>
<span id="t37" class="t " style="left:731px;top:882.86px;font-size:23.5px;color:#1b293e;letter-spacing:0.211px;">Cut</span>
<span id="t38" class="t " style="left:1097px;top:882.86px;font-size:23.5px;color:#1b293e;letter-spacing:0.249px;">Ctrl+X</span>
<span id="t39" class="t " style="left:731px;top:926.86px;font-size:23.5px;color:#1b293e;letter-spacing:0.042px;">Copy</span>
<span id="t40" class="t " style="left:1097px;top:926.86px;font-size:23.5px;color:#1b293e;letter-spacing:0.310px;">Ctrl+C</span>
<span id="t41" class="t " style="left:731px;top:970.86px;font-size:23.5px;color:#1b293e;letter-spacing:-0.508px;">Delete</span>
<span id="t42" class="t " style="left:1097px;top:970.86px;font-size:23.5px;color:#1b293e;letter-spacing:0.000px;transform:scaleX(0.9329);transform-origin:0 0;">Del</span>
<span id="t43" class="t " style="left:731px;top:1014.86px;font-size:23.5px;color:#1b293e;letter-spacing:-0.766px;">Rename</span>
<span id="t44" class="t " style="left:731px;top:1064.86px;font-size:23.5px;color:#1b293e;letter-spacing:-0.190px;">Properties</span>
<span id="t45" class="t " style="left:1097px;top:1064.86px;font-size:23.5px;color:#1b293e;letter-spacing:0.221px;">Alt+Enter</span>
<svg style="left:672px;top:642px" width="32" height="30" viewBox="0 0 32 30"><path d="M27,9 H15 A9.500,9.500 0 0 0 7,24.500" fill="none" stroke="#3b3b3b" stroke-width="4"/><path d="M19,1.500 L28.500,9 L19,16.500" fill="none" stroke="#3b3b3b" stroke-width="3.600"/></svg>
<svg style="left:672px;top:781px" width="32" height="30" viewBox="0 0 32 30"><path d="M8,6 V2 H29 V19 H24" fill="none" stroke="#3b3b3b" stroke-width="2"/><rect x="8" y="1" width="21" height="4" fill="#3b3b3b"/><rect x="3" y="10" width="18" height="18" fill="#f5f5f5" stroke="#3b3b3b" stroke-width="2"/><rect x="3" y="9" width="18" height="4" fill="#3b3b3b"/><rect x="6" y="16" width="2" height="2" fill="#3b3b3b"/><rect x="10" y="16" width="8" height="2" fill="#3b3b3b"/><rect x="6" y="20" width="2" height="2" fill="#3b3b3b"/><rect x="10" y="20" width="8" height="2" fill="#3b3b3b"/><rect x="6" y="24" width="2" height="2" fill="#3b3b3b"/><rect x="10" y="24" width="8" height="2" fill="#3b3b3b"/><rect x="24" y="8" width="2" height="2" fill="#3b3b3b"/><rect x="24" y="12" width="2" height="2" fill="#3b3b3b"/></svg>
<svg style="left:674px;top:880px" width="28" height="32" viewBox="0 0 28 32"><path d="M7,2 L18,20 M21,2 L10,20" stroke="#3b3b3b" stroke-width="2.400" fill="none"/><circle cx="7.500" cy="25" r="4" fill="#f2f4fe" stroke="#3b3b3b" stroke-width="2"/><circle cx="20.500" cy="25" r="4" fill="#f2f4fe" stroke="#3b3b3b" stroke-width="2"/></svg>
<svg style="left:674px;top:924px" width="28" height="32" viewBox="0 0 28 32"><path d="M10,9 V3 H25 V21 H19" fill="none" stroke="#3b3b3b" stroke-width="2"/><rect x="3" y="10" width="15" height="19" fill="#f2f4fe" stroke="#3b3b3b" stroke-width="2"/></svg>
<svg style="left:671px;top:970px" width="34" height="30" viewBox="0 0 34 30"><path d="M4,3 L30,28 M30,3 L4,28" stroke="#a1260d" stroke-width="5.500" fill="none"/></svg>
<svg style="left:673px;top:1016px" width="30" height="22" viewBox="0 0 30 22" shape-rendering="crispEdges"><rect x="2" y="0" width="10" height="2" fill="#3b3b3b"/><rect x="2" y="20" width="10" height="2" fill="#3b3b3b"/><rect x="5" y="0" width="4" height="22" fill="#3b3b3b"/><rect x="12" y="4" width="2" height="2" fill="#3b3b3b"/><rect x="12" y="16" width="2" height="2" fill="#3b3b3b"/><rect x="16" y="4" width="2" height="2" fill="#3b3b3b"/><rect x="16" y="16" width="2" height="2" fill="#3b3b3b"/><rect x="20" y="4" width="2" height="2" fill="#3b3b3b"/><rect x="20" y="16" width="2" height="2" fill="#3b3b3b"/><rect x="24" y="4" width="2" height="2" fill="#3b3b3b"/><rect x="24" y="16" width="2" height="2" fill="#3b3b3b"/><rect x="28" y="4" width="2" height="2" fill="#3b3b3b"/><rect x="28" y="16" width="2" height="2" fill="#3b3b3b"/><rect x="0" y="4" width="2" height="2" fill="#3b3b3b"/><rect x="28" y="4" width="2" height="2" fill="#3b3b3b"/><rect x="0" y="8" width="2" height="2" fill="#3b3b3b"/><rect x="28" y="8" width="2" height="2" fill="#3b3b3b"/><rect x="0" y="12" width="2" height="2" fill="#3b3b3b"/><rect x="28" y="12" width="2" height="2" fill="#3b3b3b"/><rect x="0" y="16" width="2" height="2" fill="#3b3b3b"/><rect x="28" y="16" width="2" height="2" fill="#3b3b3b"/></svg>
<svg style="left:677px;top:1065px" width="24" height="24" viewBox="0 0 24 24"><path d="M11,1 H18.500 L16.500,3.500 L14.500,5 V9.500 H19 L21,7 L22.800,5.400 V13 L20.500,16.500 H11 L6.500,22.800 H1 V17.200 L5,13 L7.300,12.300 V5.200 L9,3 Z" fill="#3b3b3b"/></svg>
<div style="left:0px;top:1156px;width:1526px;height:146px;background:linear-gradient(to bottom, rgba(255,255,255,0) 0%, rgba(255,255,255,1) 97%);"></div>
</div></body></html>
